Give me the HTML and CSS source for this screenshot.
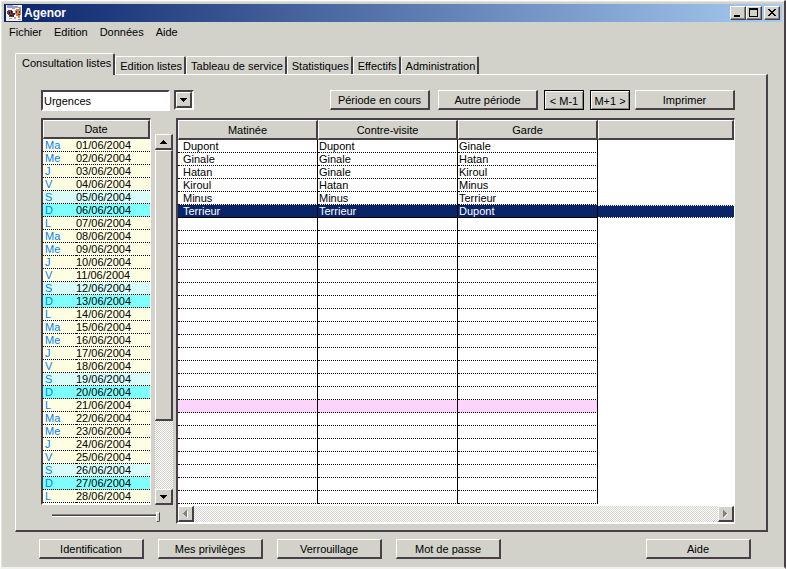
FILE: index.html
```html
<!DOCTYPE html>
<html lang="fr">
<head>
<meta charset="utf-8">
<title>Agenor</title>
<link rel="stylesheet" href="styles.css">
</head>
<body>
<div class="window">
  <header class="titlebar">
    <svg class="app-icon" viewBox="0 0 16 16" shape-rendering="crispEdges" aria-hidden="true">
      <rect width="16" height="16" fill="#f4f4f0"/>
      <path d="M1 0h6v1h5v1h3v3h-2v-2h-4v1h-3v-1h-5z" fill="#8fa0d0"/>
      <path d="M2 5h4v1h1v4h-1v2h-3v-2h-1v-1h-1v-3h1z" fill="#7a3f30"/>
      <path d="M3 7h1v2h-1zM5 6h1v2h-1zM4 10h2v1h-2z" fill="#1c1420"/>
      <path d="M10 4h4v1h1v5h-1v3h-2v-2h-2v-2h-1v-4h1z" fill="#c98452"/>
      <path d="M10 6h1v2h-1zM13 6h1v2h-1zM12 9h2v1h-2z" fill="#5a2a24"/>
      <path d="M6 8h3v2h-1v2h-2z" fill="#2d3350"/>
      <path d="M3 13h3v1h-3zM8 12h2v2h-2zM12 14h3v1h-3z" fill="#c0a0a8"/>
    </svg>
    <h1>Agenor</h1>
    <div class="caption">
      <button class="cap" aria-label="Réduire"><svg viewBox="0 0 12 10" shape-rendering="crispEdges"><path d="M2 7h6v2h-6z"/></svg></button>
      <button class="cap" aria-label="Agrandir"><svg viewBox="0 0 12 10" shape-rendering="crispEdges"><path d="M1 0h9v9h-9zM2 2v6h7v-6z" fill-rule="evenodd"/></svg></button>
      <button class="cap close" aria-label="Fermer"><svg viewBox="0 0 12 10" shape-rendering="crispEdges"><path d="M2 1h2v1h1v1h2v-1h1v-1h2v1h-1v1h-1v1h-1v1h1v1h1v1h1v1h-2v-1h-1v-1h-2v1h-1v1h-2v-1h1v-1h1v-1h1v-1h-1v-1h-1v-1h-1z"/></svg></button>
    </div>
  </header>
  <nav class="menu">
    <a href="#">Fichier</a><a href="#">Edition</a><a href="#">Données</a><a href="#">Aide</a>
  </nav>
  <div class="tabs" role="tablist">
    <button class="tab selected" role="tab" aria-selected="true">Consultation listes</button>
    <button class="tab" role="tab">Edition listes</button>
    <button class="tab" role="tab">Tableau de service</button>
    <button class="tab" role="tab">Statistiques</button>
    <button class="tab" role="tab">Effectifs</button>
    <button class="tab" role="tab">Administration</button>
  </div>
  <main class="panel">
    <div class="toolbar">
      <select class="combo" aria-label="Service"><option>Urgences</option></select>
      <button class="drop" aria-label="Ouvrir la liste"><span class="drop-face"><svg viewBox="0 0 7 4" shape-rendering="crispEdges"><path d="M0 0h7v1h-1v1h-1v1h-1v1h-1v-1h-1v-1h-1v-1h-1z"/></svg></span></button>
      <div class="actions">
        <button class="btn">Période en cours</button>
        <button class="btn">Autre période</button>
        <button class="btn step">&lt; M-1</button>
        <button class="btn step">M+1 &gt;</button>
        <button class="btn last">Imprimer</button>
      </div>
    </div>
    <div class="lists">
      <div class="date-side">
        <div class="date-row">
          <div class="sunken dates">
            <table>
              <colgroup><col class="day"><col></colgroup>
              <thead><tr><th colspan="2">Date</th></tr></thead>
              <tbody id="dates"></tbody>
            </table>
          </div>
          <div class="vscroll">
            <button class="arrow" aria-label="Monter"><svg viewBox="0 0 7 4" shape-rendering="crispEdges"><path d="M3 0h1v1h1v1h1v1h1v1h-7v-1h1v-1h1v-1h1z"/></svg></button>
            <div class="thumb"></div>
            <div class="track"></div>
            <button class="arrow" aria-label="Descendre"><svg viewBox="0 0 7 4" shape-rendering="crispEdges"><path d="M0 0h7v1h-1v1h-1v1h-1v1h-1v-1h-1v-1h-1v-1h-1z"/></svg></button>
          </div>
        </div>
        <input class="slider" type="range" min="0" max="100" value="100" aria-label="Position">
      </div>
      <div class="sunken roster">
        <table>
          <colgroup><col class="shift"><col class="shift"><col class="shift"><col></colgroup>
          <thead><tr><th>Matinée</th><th>Contre-visite</th><th>Garde</th><th></th></tr></thead>
          <tbody id="roster"></tbody>
        </table>
        <div class="hscroll">
          <button class="arrow" aria-label="Gauche" disabled><svg viewBox="0 0 5 8" shape-rendering="crispEdges"><path d="M4 1h1v7h-1v-1h-1v-1h-1z" fill="#fff"/><path d="M3 0h1v7h-1v-1h-1v-1h-1v-1h-1v-1h1v-1h1v-1h1z" fill="#808080"/></svg></button>
          <button class="arrow" aria-label="Droite" disabled><svg viewBox="0 0 5 8" shape-rendering="crispEdges"><path d="M1 7h1v-1h1v-1h1v-1h1v1h-1v1h-1v1h-1v1h-1z" fill="#fff"/><path d="M0 0h1v1h1v1h1v1h1v1h-1v1h-1v1h-1v1h-1z" fill="#808080"/></svg></button>
        </div>
      </div>
    </div>
  </main>
  <footer class="footer">
    <button class="btn">Identification</button>
    <button class="btn">Mes privilèges</button>
    <button class="btn">Verrouillage</button>
    <button class="btn">Mot de passe</button>
    <button class="btn help">Aide</button>
  </footer>
</div>
<script src="app.js"></script>
</body>
</html>
```
FILE: styles.css
```css
:root {
  --face: #d2d2cb;
  --dark: #484048;
  --mid: #88847f;
}
* { box-sizing: border-box; }
body {
  margin: 0;
  background: var(--face);
  font: 11px/13px "Liberation Sans", Arial, sans-serif;
  color: #000;
}
button, select, input { font: inherit; color: inherit; margin: 0; padding: 0; border-radius: 0; }
button { background: var(--face); white-space: nowrap; }
svg { display: block; }
.window {
  min-height: 100vh;
  padding: 2px 2px 8px 2px;
  border: 1px solid #fff;
  border-right: 2px solid var(--dark);
  border-bottom: 2px solid #f0f0ee;
  box-shadow: inset 1px 1px 0 #e6e6e0;
}
.titlebar {
  display: flex;
  align-items: center;
  height: 18px;
  margin: 1px 0 0 1px;
  padding: 0 2px;
  background: linear-gradient(90deg, #0a246a, #a6caf0);
}
.app-icon { width: 16px; height: 16px; }
.titlebar h1 { margin: 0 0 0 2px; font: bold 12px/16px "Liberation Sans", sans-serif; color: #fff; }
.caption { display: flex; margin-left: auto; }
.cap {
  width: 16px; height: 14px;
  border: 1px solid;
  border-color: #fff var(--dark) var(--dark) #fff;
  box-shadow: inset -1px -1px 0 var(--mid);
  padding: 1px;
}
.cap svg { width: 12px; height: 10px; }
.close { margin-left: 2px; }
.menu { display: flex; gap: 12px; padding: 4px 6px 0; height: 31px; }
.menu a { color: inherit; text-decoration: none; }

.tabs { display: flex; align-items: flex-end; height: 21px; padding-left: 12px; position: relative; }
.tab {
  height: 18px;
  padding: 1px 2px 0 4px;
  border: 1px solid #fff;
  border-right: 2px solid var(--dark);
  border-bottom: 0;
  border-top-left-radius: 2px;
  border-top-right-radius: 2px;
}
.tab.selected { height: 22px; margin-bottom: -1px; padding: 0 2px 2px 6px; }
.panel {
  margin: 0 14px 0 12px;
  padding: 15px 31px 6px 25px;
  border: 1px solid #fff;
  border-right: 2px solid var(--dark);
  border-bottom: 2px solid var(--dark);
}
.toolbar { display: flex; height: 21px; }
.combo {
  appearance: none;
  width: 129px; height: 21px;
  padding: 1px 0 0 1px;
  background: #fff;
  border: 2px solid #fff;
  border-top-color: var(--dark);
  border-left-color: var(--dark);
}
.drop {
  width: 20px; height: 20px;
  margin-left: 4px;
  border: 2px solid #fff;
  border-color: var(--dark) #fff #fff var(--dark);
}
.drop-face {
  display: grid; place-items: center;
  height: 16px;
  border: 1px solid #fff;
  border-right: 2px solid var(--dark);
  border-bottom: 2px solid var(--dark);
}
.drop svg { width: 7px; height: 4px; }
.actions { display: flex; gap: 6px; margin-left: auto; }
.btn {
  width: 100px; height: 20px;
  padding-top: 2px;
  border: 1px solid #fff;
  border-right: 2px solid var(--dark);
  border-bottom: 2px solid var(--dark);
}
.actions .btn:first-child { margin-right: 2px; }
.btn.step {
  width: 40px;
  border: 1px solid #000;
  box-shadow: inset 1px 1px 0 #fff, inset -1px -1px 0 var(--mid);
}
.btn.last { margin-left: -1px; }

.lists { display: flex; margin-top: 7px; }
.date-side { width: 135px; }
.date-row { display: flex; align-items: flex-end; gap: 4px; }
.sunken {
  border: 2px solid #fff;
  border-top-color: var(--dark);
  border-left-color: var(--dark);
  background: #fff;
}
table { width: 100%; border-collapse: separate; border-spacing: 0; table-layout: fixed; }
th {
  height: 20px;
  padding: 2px 0 0;
  font-weight: normal;
  background: var(--face);
  border: 1px solid #fff;
  border-right: 2px solid var(--dark);
  border-bottom: 2px solid var(--dark);
}
td {
  height: 13px;
  padding: 0 0 0 1px;
  line-height: 12px;
  border-bottom: 1px dotted #000;
  white-space: nowrap;
}
.dates { width: 110px; background: #fefee2; border-right-width: 1px; }
.dates th { height: 19px; padding-top: 0; }
.dates td { background: #fefee2; padding-left: 2px; }
.day { width: 33px; }
.dates td:first-child { color: #0080ff; }
.dates td + td { padding-left: 0; }
.dates .sat td { background: #d8fdf8; }
.dates .sun td { background: #80ffff; }

.vscroll { display: flex; flex-direction: column; width: 18px; height: 371px; }
.arrow {
  display: grid; place-items: center;
  flex: none;
  width: 18px; height: 16px;
  border: 1px solid #fff;
  border-right: 2px solid var(--dark);
  border-bottom: 2px solid var(--dark);
}
.vscroll .arrow svg { width: 7px; height: 4px; }
.thumb {
  flex: 270 1 0;
  border: 1px solid #fff;
  border-right: 2px solid var(--dark);
  border-bottom: 2px solid var(--dark);
}
.track { flex: 69 1 0; }
.track, .hscroll { background: repeating-conic-gradient(#fff 0 25%, var(--face) 0 50%) 0 0 / 2px 2px; }

.slider {
  appearance: none;
  display: block;
  width: 108px; height: 10px;
  margin: 7px 0 0 11px;
  background: linear-gradient(var(--mid), var(--mid)) 0 2px / 106px 1px no-repeat,
    linear-gradient(var(--dark), var(--dark)) 0 3px / 106px 1px no-repeat,
    linear-gradient(#fff, #fff) 0 4px / 106px 1px no-repeat;
}
.slider::-webkit-slider-thumb {
  appearance: none;
  width: 4px; height: 10px;
  background: var(--face);
  border: 1px solid #fff;
  border-right-color: var(--dark);
  border-bottom-color: var(--dark);
  border-bottom-right-radius: 2px;
}
.roster { flex: 1; min-width: 0; border-right-width: 1px; }
.shift { width: 140px; }
.roster td { border-right: 1px solid #000; }
.roster td:first-child { padding-left: 5px; }
.roster td:last-child { border-right: 0; border-bottom: 0; }
.roster .marked td { background: #fcd4fc; }
.roster .marked td:last-child { background: none; }
.roster .current td { background: #0a246a; color: #fff; border-bottom: 1px solid #000; }
.roster .current td:last-child { border-top: 1px dotted #fff; border-bottom: 1px dotted #fff; }
.hscroll { display: flex; justify-content: space-between; height: 16px; margin-top: 2px; }
.hscroll .arrow { width: 16px; }
.hscroll .arrow svg { width: 5px; height: 8px; }

.footer { display: flex; gap: 14px; margin: 7px 31px 0 36px; }
.footer .btn { width: 105px; }
.help { margin-left: auto; }
```
FILE: app.js
```js
const days = ["Ma", "Me", "J", "V", "S", "D", "L"];
const kinds = { S: "sat", D: "sun" };
const shifts = [
  ["Dupont", "Dupont", "Ginale"],
  ["Ginale", "Ginale", "Hatan"],
  ["Hatan", "Ginale", "Kiroul"],
  ["Kiroul", "Hatan", "Minus"],
  ["Minus", "Minus", "Terrieur"],
  ["Terrieur", "Terrieur", "Dupont"]
];
const currentRow = 5;
const markedRow = 20;

function addRow(body, cells, className) {
  const row = body.insertRow();
  row.className = className;
  cells.forEach((text) => { row.insertCell().textContent = text; });
}

const dates = document.getElementById("dates");
const roster = document.getElementById("roster");
for (let i = 0; i < 28; i++) {
  const day = days[i % 7];
  addRow(dates, [day, String(i + 1).padStart(2, "0") + "/06/2004"], kinds[day] || "");
  const state = i === currentRow ? "current" : i === markedRow ? "marked" : "";
  addRow(roster, [...(shifts[i] || ["", "", ""]), ""], state);
}
```
